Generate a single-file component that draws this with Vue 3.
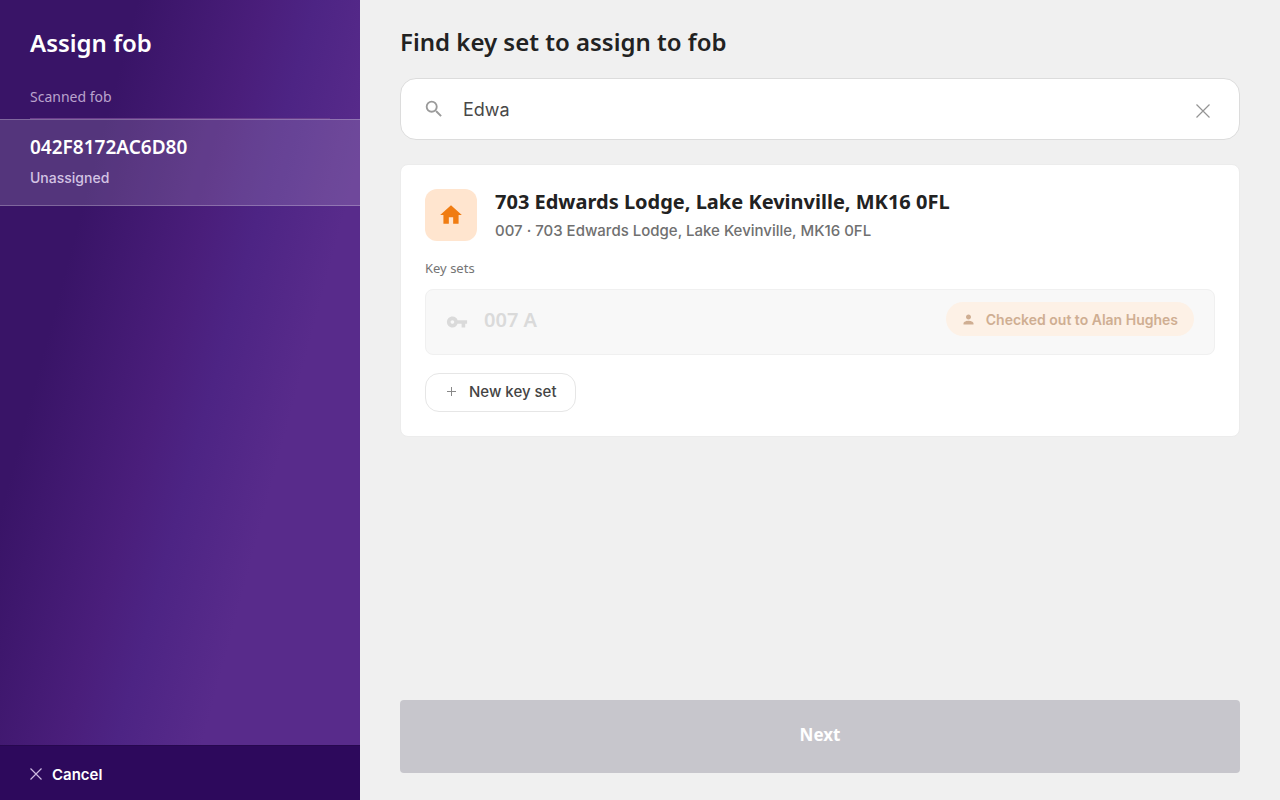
<template>
  <div class="page">
    <aside class="sidebar">
      <div class="sidebar-top">
        <h2 class="sidebar-title">Assign fob</h2>
        <p class="sidebar-label">Scanned fob</p>
      </div>
      <div class="fob">
        <strong class="fob-id">{{ fob.id }}</strong>
        <span class="fob-status">{{ fob.status }}</span>
      </div>
      <button type="button" class="cancel">
        <svg width="12" height="12" viewBox="0 0 12 12">
          <path d="M0.5 0.5L11.5 11.5M11.5 0.5L0.5 11.5" stroke="currentColor" stroke-width="1.2" />
        </svg>
        Cancel
      </button>
    </aside>

    <main class="content">
      <h1><label for="search">Find key set to assign to fob</label></h1>

      <div class="search">
        <svg class="search-icon" width="22" height="22" viewBox="0 0 24 24">
          <path
            fill="currentColor"
            d="M15.5 14h-.79l-.28-.27A6.47 6.47 0 0 0 16 9.5 6.5 6.5 0 1 0 9.5 16c1.61 0 3.09-.59 4.23-1.57l.27.28v.79l5 4.99L20.49 19l-4.99-5zm-6 0C7.01 14 5 11.99 5 9.5S7.01 5 9.5 5 14 7.01 14 9.5 11.99 14 9.5 14z"
          />
        </svg>
        <input id="search" v-model="query" type="text" autocomplete="off" />
        <button type="button" class="clear" aria-label="Clear search" @click="query = ''">
          <svg width="14" height="14" viewBox="0 0 14 14">
            <path d="M0.5 0.5L13.5 13.5M13.5 0.5L0.5 13.5" stroke="currentColor" stroke-width="1.2" />
          </svg>
        </button>
      </div>

      <section v-for="property in properties" :key="property.ref" class="card">
        <div class="property">
          <span class="property-icon">
            <svg width="26" height="26" viewBox="0 0 24 24">
              <path fill="currentColor" d="M10 20v-6h4v6h5v-8h3L12 3 2 12h3v8z" />
            </svg>
          </span>
          <div class="property-text">
            <h2>{{ property.address }}</h2>
            <p>{{ property.ref }} · {{ property.address }}</p>
          </div>
        </div>

        <h3>Key sets</h3>
        <button v-for="set in property.keySets" :key="set.name" type="button" class="key-set" disabled>
          <svg class="key-icon" width="22" height="22" viewBox="0 0 24 24">
            <path
              fill="currentColor"
              d="M12.65 10A5.99 5.99 0 0 0 7 6c-3.31 0-6 2.69-6 6s2.69 6 6 6a5.99 5.99 0 0 0 5.65-4H17v4h4v-4h2v-4H12.65zM7 14c-1.1 0-2-.9-2-2s.9-2 2-2 2 .9 2 2-.9 2-2 2z"
            />
          </svg>
          <span class="key-name">{{ set.name }}</span>
          <span class="badge">
            <svg width="15" height="15" viewBox="0 0 24 24">
              <path
                fill="currentColor"
                d="M12 12c2.21 0 4-1.79 4-4s-1.79-4-4-4-4 1.79-4 4 1.79 4 4 4zm0 2c-2.67 0-8 1.34-8 4v2h16v-2c0-2.66-5.33-4-8-4z"
              />
            </svg>
            Checked out to {{ set.holder }}
          </span>
        </button>

        <button type="button" class="new-set">
          <svg width="11" height="11" viewBox="0 0 11 11">
            <path d="M5.5 1V10M1 5.5H10" stroke="#888888" stroke-width="1" />
          </svg>
          New key set
        </button>
      </section>

      <button type="button" class="next" disabled>Next</button>
    </main>
  </div>
</template>

<script setup>
import { ref } from 'vue'

const query = ref('Edwa')

const fob = {
  id: '042F8172AC6D80',
  status: 'Unassigned',
}

const properties = ref([
  {
    ref: '007',
    address: '703 Edwards Lodge, Lake Kevinville, MK16 0FL',
    keySets: [{ name: '007 A', holder: 'Alan Hughes' }],
  },
])
</script>

<style>
body {
  margin: 0;
  background: #f0f0f0;
}
</style>

<style scoped>
* {
  box-sizing: border-box;
}

.page {
  display: grid;
  grid-template-columns: 360px 1fr;
  min-height: 100vh;
  font-family: Inter, sans-serif;
  font-size: 15px;
  color: #222222;
}

h1,
h2,
h3,
p {
  margin: 0;
}

button,
input {
  font-family: inherit;
  font-size: inherit;
}

svg {
  display: block;
  flex: none;
}

.sidebar {
  display: flex;
  flex-direction: column;
  color: #ffffff;
  background: linear-gradient(105deg, #391467 24%, #4a1e7b 46%, #4d2484 55%, #582b8b 70%);
}

.sidebar-top {
  padding: 26px 30px 0;
}

.sidebar-title {
  font: 600 24px/34px 'Noto Sans', sans-serif;
}

.sidebar-label {
  padding: 26px 0 11px;
  border-bottom: 1px solid #6a3d8c;
  font: 400 14px/21px 'Noto Sans', sans-serif;
  color: #b9a3cd;
}

.fob {
  display: flex;
  flex-direction: column;
  gap: 8px;
  padding: 14px 30px 18px;
  border: solid rgba(255, 255, 255, 0.25);
  border-width: 1px 0;
  background: rgba(255, 255, 255, 0.14);
}

.fob-id {
  font: 600 19px/27px 'Noto Sans', sans-serif;
}

.fob-status {
  line-height: 18px;
  font-size: 14px;
  font-weight: 500;
  color: #d3c3e3;
}

.cancel {
  display: flex;
  align-items: center;
  gap: 10px;
  height: 55px;
  margin-top: auto;
  padding: 2px 30px 0;
  border: 0;
  border-top: 1px solid #270850;
  background: #2d095c;
  color: #ffffff;
  font-weight: 600;
}

.cancel svg {
  color: #cdb9e0;
}

.content {
  display: flex;
  flex-direction: column;
  padding: 24px 40px 27px;
}

h1 {
  font: 600 24px/36px 'Noto Sans', sans-serif;
}

.search {
  display: flex;
  align-items: center;
  height: 62px;
  margin-top: 18px;
  padding: 0 22px;
  border: 1px solid #dcdcdc;
  border-radius: 16px;
  background: #ffffff;
}

.search-icon {
  color: #9a9a9a;
}

.search input {
  flex: 1;
  min-width: 0;
  padding: 0 18px;
  border: 0;
  outline: 0;
  background: none;
  font-size: 18px;
  color: #484848;
}

.clear {
  padding: 10px 7px 7px;
  border: 0;
  background: none;
  color: #949494;
}

.card {
  margin-top: 24px;
  padding: 24px;
  border: 1px solid #ececec;
  border-radius: 8px;
  background: #ffffff;
}

.property {
  display: flex;
  gap: 18px;
}

.property-icon {
  display: grid;
  place-items: center;
  flex: none;
  width: 52px;
  height: 52px;
  border-radius: 12px;
  background: #ffe5cf;
  color: #f07c12;
}

.property-text h2 {
  font: 700 20px/26px 'Noto Sans', sans-serif;
}

.property-text p {
  padding-top: 6px;
  line-height: 20px;
  font-weight: 500;
  color: #707070;
}

h3 {
  padding: 17px 0 11px;
  font: 400 13px/20px 'Noto Sans', sans-serif;
  color: #747474;
}

.key-set {
  display: flex;
  align-items: flex-start;
  width: 100%;
  height: 66px;
  padding: 12px 20px;
  border: 1px solid #f0f0f0;
  border-radius: 8px;
  background: #f8f8f8;
  color: #dadada;
}

.key-icon {
  margin-top: 9px;
}

.key-name {
  padding: 4px 0 0 16px;
  font: 600 20px/28px 'Noto Sans', sans-serif;
}

.badge {
  display: flex;
  align-items: center;
  gap: 10px;
  height: 34px;
  margin-left: auto;
  padding: 0 16px 0 15px;
  border-radius: 17px;
  background: #fdf1e6;
  color: #cfae92;
  font-size: 14px;
  font-weight: 600;
}

.new-set {
  display: flex;
  align-items: center;
  gap: 12px;
  height: 39px;
  margin-top: 18px;
  padding: 0 18px 2px 20px;
  border: 1px solid #e6e6e6;
  border-radius: 14px;
  background: #ffffff;
  color: #444444;
  font-weight: 500;
}

.next {
  height: 73px;
  margin-top: auto;
  padding: 0 0 4px;
  border: 0;
  border-radius: 4px;
  background: #c7c6cc;
  color: #ffffff;
  font: 700 17px/24px 'Noto Sans', sans-serif;
}
</style>
